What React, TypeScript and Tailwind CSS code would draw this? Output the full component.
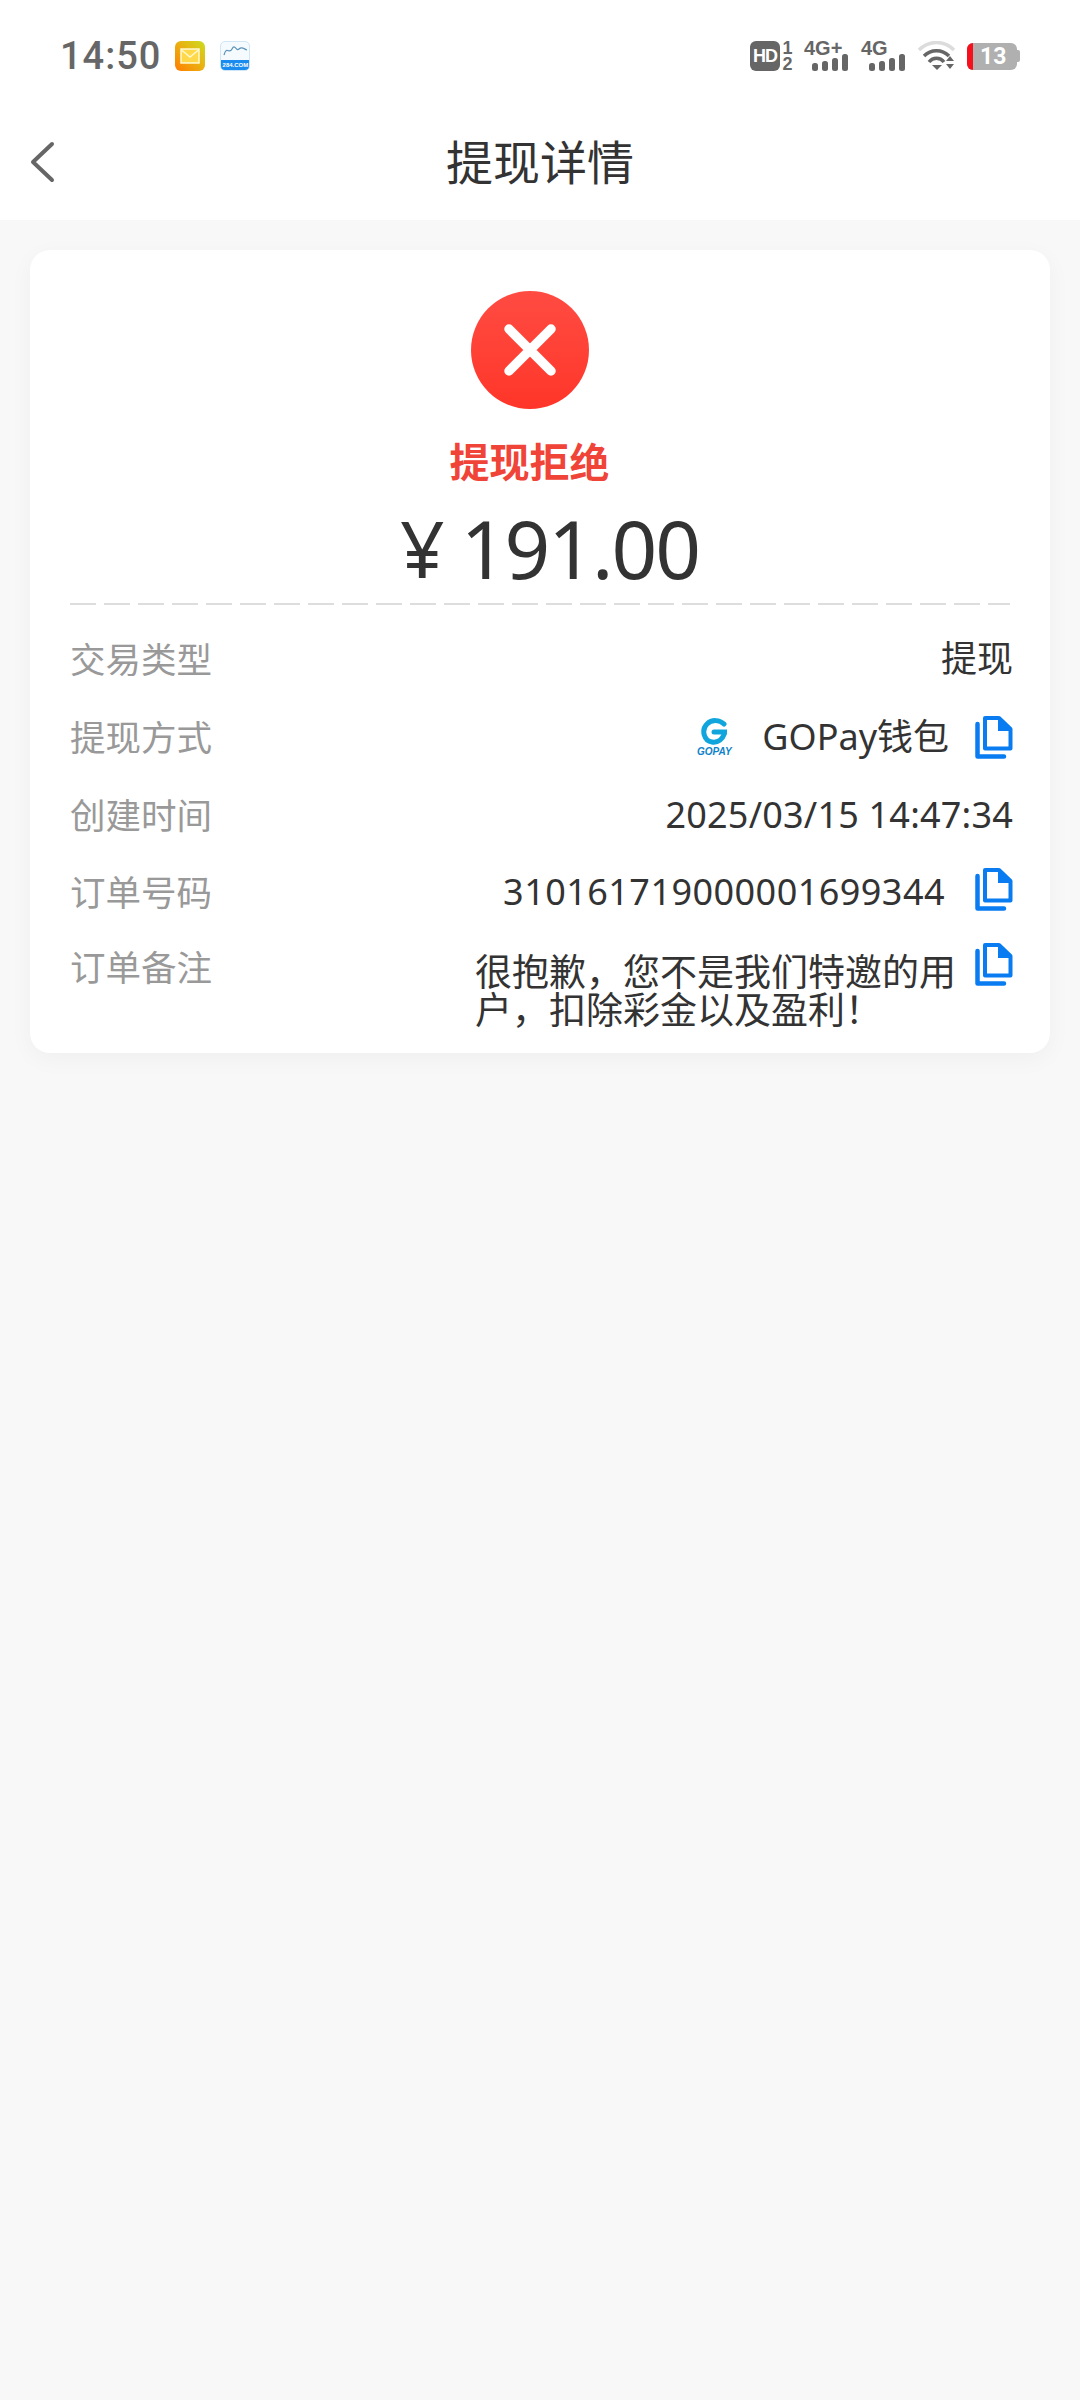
const cjk = "font-['Noto_Sans','Noto_Sans_CJK_SC',sans-serif]";

const CopyIcon = () => (
	<svg width="38" height="44" viewBox="0 0 38 44" fill="none" className="shrink-0">
		<path d="M10 3H24L35.5 14V33.5H10Z" stroke="#0a7cf2" strokeWidth="4" strokeLinejoin="round" />
		<path d="M23 2H25L37 14V16H23Z" fill="#0a7cf2" />
		<path d="M2.5 9V41.5H29" stroke="#0a7cf2" strokeWidth="4.5" strokeLinecap="round" strokeLinejoin="round" />
	</svg>
);

const SignalBars = () => (
	<svg width="36" height="17" viewBox="0 0 36 17" className="block">
		<rect x="0" y="9" width="6" height="8" rx="2.5" fill="#666" />
		<rect x="10" y="7" width="6" height="10" rx="2.5" fill="#666" />
		<rect x="20" y="4" width="6" height="13" rx="2.5" fill="#666" />
		<rect x="30" y="0" width="6" height="17" rx="2.5" fill="#666" />
	</svg>
);

const Network = ({ label }: { label: string }) => (
	<div className="relative h-[30px] w-[44px]">
		<span className="absolute left-0 top-[-3px] text-[20px] leading-[20px] font-bold text-[#666] font-['Liberation_Sans',sans-serif]">
			{label}
		</span>
		<div className="absolute right-0 bottom-0">
			<SignalBars />
		</div>
	</div>
);

const StatusBar = () => (
	<div className="flex h-[110px] items-center pl-[60px] pr-[60px] pt-[2px]">
		<span className="text-[38px] font-medium leading-none tracking-[1px] text-[#666] font-['Roboto',sans-serif]">
			14:50
		</span>
		<div className="ml-[14px] flex h-[30px] w-[30px] items-center justify-center rounded-[6px] bg-gradient-to-tr from-[#ff7a00] to-[#c8dc1e]">
			<svg width="20" height="16" viewBox="0 0 20 16" fill="none">
				<rect x="1" y="1" width="18" height="14" fill="#ffd94a" stroke="#fff8d0" strokeWidth="1.5" />
				<path d="M1.5 2L10 9L18.5 2" stroke="#fff8d0" strokeWidth="1.5" />
			</svg>
		</div>
		<div className="ml-[15px] flex h-[30px] w-[30px] flex-col justify-end overflow-hidden rounded-[5px] border border-[#cfe6f7] bg-[#f4fafe]">
			<svg width="28" height="17" viewBox="0 0 28 17" fill="none">
				<path d="M3 12C6 2 8 12 11 6S15 9 18 6 23 6 26 7" stroke="#5b93b8" strokeWidth="1.2" />
			</svg>
			<div className="flex h-[10px] items-center justify-center bg-[#1a8cf0] text-[6px] font-bold leading-none text-white font-['Liberation_Sans',sans-serif]">
				284.COM
			</div>
		</div>

		<div className="ml-auto flex items-center">
			<div className="flex h-[30px] w-[30px] items-center justify-center rounded-[6px] bg-[#666] text-[18px] font-bold leading-none tracking-[-1px] text-white font-['Liberation_Sans',sans-serif]">
				HD
			</div>
			<div className="ml-[2px] flex w-[11px] flex-col items-center text-[18px] font-bold leading-[16px] text-[#666] font-['Liberation_Sans',sans-serif]">
				<span>1</span>
				<span>2</span>
			</div>
			<div className="ml-[11px]">
				<Network label="4G+" />
			</div>
			<div className="ml-[13px]">
				<Network label="4G" />
			</div>
			<svg width="38" height="30" viewBox="0 0 38 30" fill="none" className="ml-[13px]">
				<path d="M1 9C11 -1 26 -1 36 9" stroke="#dcdcdc" strokeWidth="3.5" />
				<path d="M6 15C13 8 24 8 31 15" stroke="#666" strokeWidth="3.5" />
				<path d="M11 21C15 16 22 16 26 21" stroke="#666" strokeWidth="3.5" />
				<path d="M14 24H24L19 29Z" fill="#666" />
				<path d="M28 20H36L32 15ZM28 23H36L32 28Z" fill="#666" />
			</svg>
			<div className="ml-[11px] flex items-center">
				<div className="relative flex h-[27px] w-[50px] items-center overflow-hidden rounded-[6px] bg-[#b0b0b0]">
					<div className="h-full w-[6px] bg-[#f5101c]" />
					<span className="ml-[7px] text-[23px] font-bold leading-none text-white font-['Roboto',sans-serif]">13</span>
				</div>
				<div className="h-[12px] w-[3px] rounded-r-[2px] bg-[#b0b0b0]" />
			</div>
		</div>
	</div>
);

const Header = () => (
	<div className="relative flex h-[110px] items-center justify-center pb-[6px]">
		<svg
			width="28"
			height="44"
			viewBox="0 0 28 44"
			fill="none"
			className="absolute left-[28px] top-[30px]"
		>
			<path d="M24 4L5 22L24 40" stroke="#666" strokeWidth="4" strokeLinecap="round" strokeLinejoin="round" />
		</svg>
		<h1 className={`text-[47px] font-normal leading-none text-[#333] ${cjk}`}>提现详情</h1>
	</div>
);

const GopayLogo = () => (
	<div className="flex w-[40px] flex-col items-center">
		<svg width="26" height="27" viewBox="0 0 26 27" fill="none">
			<path d="M23 6C19 2 11 1 6 6C0 12 3 23 11 24C17 25 22 21 24 14H13" stroke="#10a5dc" strokeWidth="5" strokeLinecap="round" />
		</svg>
		<span className="mt-[2px] text-[10px] font-bold italic leading-none text-[#0f83c9] font-['Liberation_Sans',sans-serif]">
			GOPAY
		</span>
	</div>
);

const rows = [
	{ label: "交易类型", height: "h-[78px]" },
	{ label: "提现方式", height: "h-[78px]" },
	{ label: "创建时间", height: "h-[78px]" },
	{ label: "订单号码", height: "h-[76px]" },
];

const App = () => {
	return (
		<div className={`flex min-h-[2400px] flex-col bg-[#f8f8f8] ${cjk}`}>
			<div className="bg-white">
				<StatusBar />
				<Header />
			</div>

			<div className="mx-[30px] mt-[30px] h-[803px] rounded-[20px] bg-white pl-[40px] pr-[37px] shadow-[0_6px_24px_rgba(0,0,0,0.04)]">
				<div className="flex flex-col items-center pr-[24px]">
					<div className="mt-[41px] flex h-[118px] w-[118px] items-center justify-center rounded-full bg-gradient-to-b from-[#ff4b42] to-[#ff3528]">
						<svg width="52" height="52" viewBox="0 0 52 52" fill="none">
							<path d="M5 5L47 47M47 5L5 47" stroke="white" strokeWidth="9.5" strokeLinecap="round" />
						</svg>
					</div>
					<div className="mt-[29px] text-[40px] font-bold leading-[48px] text-[#f04438]">提现拒绝</div>
					<div className="ml-[40px] mt-[14px] flex items-center text-[80px] leading-[96px] tracking-[-2px] text-[#333]">
						<span className="mr-[18px] text-[78px]">¥</span>
						<span>191.00</span>
					</div>
				</div>

				<div className="mr-[3px] mt-[7px] h-[2px] bg-[repeating-linear-gradient(90deg,#dddddd_0,#dddddd_26px,transparent_26px,transparent_34px)]" />

				<div className="mt-[15px] text-[36px] leading-[40px]">
					{rows.map((row, i) => (
						<div key={row.label} className={`flex items-center justify-between ${row.height}`}>
							<span className="text-[35.5px] text-[#999]">{row.label}</span>
							{i === 0 && <span className="text-[#333]">提现</span>}
							{i === 1 && (
								<div className="flex items-center text-[#333]">
									<GopayLogo />
									<span className="ml-[28px]">GOPay钱包</span>
									<div className="ml-[26px]">
										<CopyIcon />
									</div>
								</div>
							)}
							{i === 2 && <span className="tracking-[0.2px] text-[#333]">2025/03/15 14:47:34</span>}
							{i === 3 && (
								<div className="flex items-center text-[#333]">
									<span className="tracking-[0.45px]">310161719000001699344</span>
									<div className="mb-[6px] ml-[30px]">
										<CopyIcon />
									</div>
								</div>
							)}
						</div>
					))}
					<div className="mt-[-3px] flex items-start justify-between">
						<span className="mt-[20px] text-[35.5px] text-[#999]">订单备注</span>
						<div className="flex items-start">
							<p className="mt-[26px] w-[482px] text-[37px] leading-[38px] text-[#333]">
								很抱歉，您不是我们特邀的用户，扣除彩金以及盈利！
							</p>
							<div className="ml-[18px] mt-[15px]">
								<CopyIcon />
							</div>
						</div>
					</div>
				</div>
			</div>
		</div>
	);
};

export default App;
